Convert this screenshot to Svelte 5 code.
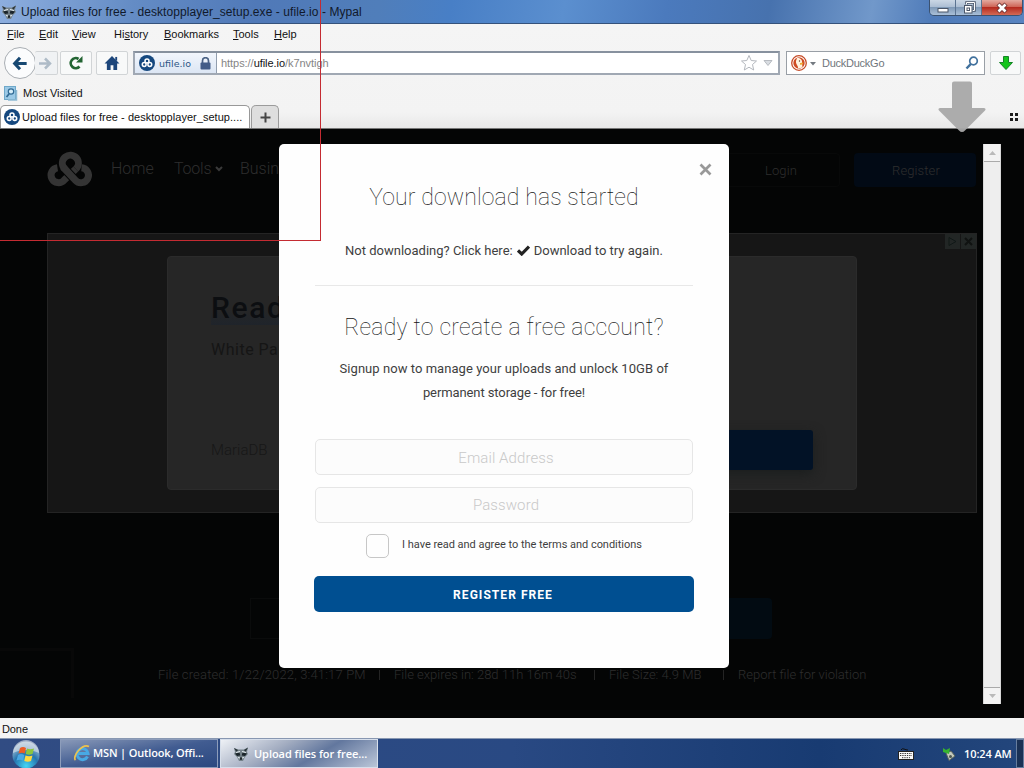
<script lang="ts">
    const menus = [
        { key: "F", rest: "ile", before: "", width: 32 },
        { key: "E", rest: "dit", before: "", width: 33 },
        { key: "V", rest: "iew", before: "", width: 42 },
        { key: "s", rest: "tory", before: "Hi", width: 50 },
        { key: "B", rest: "ookmarks", before: "", width: 69 },
        { key: "T", rest: "ools", before: "", width: 41 },
        { key: "H", rest: "elp", before: "", width: 40 },
    ];

    const details = [
        { text: "File created: 1/22/2022, 3:41:17 PM", width: 221 },
        { text: "File expires in: 28d 11h 16m 40s", width: 200 },
        { text: "File Size: 4.9 MB", width: 114 },
        { text: "Report file for violation", width: 130 },
    ];
</script>

{#snippet raccoon()}
    <svg class="raccoon" width="16" height="16" viewBox="0 0 16 16">
        <path d="M1 2 5 3.500 11 3.500 15 1.500 14 6 15 8 12 11 10 15H6L4 11 1 8 2 6Z" fill="#75828a" />
        <path d="M1 2 5 4 3.500 6ZM15 1.500 11 4 12.500 6Z" fill="#2a3439" />
        <path d="M2 7.500 6.500 6.500 7.300 9.500 4 10ZM14 7.500 9.500 6.500 8.700 9.500 12 10Z" fill="#1a242a" />
        <path d="M3 6.500 7 5.500M13 6.500 9 5.500M5 11.500 7 12M11 11.500 9 12" stroke="#e3eaed" stroke-width="1.200" />
        <path d="M7 11.500H9L8.600 14H7.400Z" fill="#10171b" />
    </svg>
{/snippet}

{#snippet knot(color)}
    <svg class="knot" width="46" height="36" viewBox="0 0 46 36" fill="none" stroke={color} stroke-width="7">
        <path d="M28.800 17 17 28.300A7.500 7.500 0 1 1 10.500 15.700" />
        <path d="M23 22 17 16A8 8 0 1 1 28.800 17" />
        <path d="M14.500 13.500 28.500 28.300A7.500 7.500 0 1 0 34.500 15.700" stroke="#050606" stroke-width="9" stroke-dasharray="0 5 13 100" />
        <path d="M16 15 28.500 28.300A7.500 7.500 0 1 0 34.500 15.700" />
    </svg>
{/snippet}

{#snippet favicon()}
    <svg width="16" height="16" viewBox="0 0 16 16">
        <circle cx="8" cy="8" r="8" fill="#15487f" />
        <g fill="none" stroke="#fff" stroke-width="1.500">
            <circle cx="8" cy="5.900" r="2" />
            <circle cx="5.200" cy="9.500" r="1.900" />
            <circle cx="10.800" cy="9.500" r="1.900" />
        </g>
    </svg>
{/snippet}

<div class="desktop">
    <header class="titlebar">
        {@render raccoon()}
        <span class="title">Upload files for free - desktopplayer_setup.exe - ufile.io - Mypal</span>
        <div class="controls">
            <span class="control min">
                <svg width="14" height="14"><rect x="2" y="7.500" width="10" height="3.500" fill="#fff" stroke="#4b5668" /></svg>
            </span>
            <span class="control max">
                <svg width="14" height="14" fill="none">
                    <path d="M4.500 3.500V1.500H12.500V9.500H10.500" stroke="#4b5668" stroke-width="2.500" />
                    <path d="M4.500 3.500V1.500H12.500V9.500H10.500" stroke="#fff" />
                    <rect x="2.500" y="4.500" width="7.500" height="7.500" fill="#fff" stroke="#4b5668" />
                    <rect x="5" y="7" width="2.500" height="2.500" stroke="#4b5668" />
                </svg>
            </span>
            <span class="control close">
                <svg width="14" height="14" viewBox="0 0 14 14">
                    <path d="M3 3 11 11M11 3 3 11" stroke="#6e3232" stroke-width="4.500" />
                    <path d="M3.500 3.500 10.500 10.500M10.500 3.500 3.500 10.500" stroke="#fff" stroke-width="2.700" />
                </svg>
            </span>
        </div>
    </header>

    <div class="chrome">
        <nav class="menubar">
            {#each menus as menu}
                <span style="width: {menu.width}px">{menu.before}<u>{menu.key}</u>{menu.rest}</span>
            {/each}
        </nav>

        <div class="toolbar">
            <span class="back">
                <svg width="16" height="15" viewBox="0 0 18 16" fill="none" stroke="#174872" stroke-width="3.500">
                    <path d="M9 1.500 3 8 9 14.500M3.500 8H16.500" />
                </svg>
            </span>
            <span class="tool forward">
                <svg width="14" height="13" viewBox="0 0 14 13" fill="none" stroke="#aebbc7" stroke-width="2.500">
                    <path d="M7 1.500 12 6.500 7 11.500M1 6.500H11.500" />
                </svg>
            </span>
            <span class="tool reload">
                <svg width="16" height="16" viewBox="0 0 16 16">
                    <path d="M11.500 11.500A5 5 0 1 1 10.500 4" fill="none" stroke="#226432" stroke-width="2.700" />
                    <path d="M14.500 1V7.500H8Z" fill="#226432" />
                </svg>
            </span>
            <span class="tool home">
                <svg width="16" height="14" viewBox="0 0 16 15" fill="#1d467b">
                    <path d="M8 0 16 8H13.500V15H9.500V10H6.500V15H2.500V8H0Z" />
                    <rect x="11.500" y="1" width="2" height="4" />
                </svg>
            </span>
            <div class="urlbar">
                <div class="identity">
                    {@render favicon()}
                    <span>ufile.io</span>
                    <svg width="11" height="13" viewBox="0 0 11 13">
                        <path d="M2.500 7V3.700A3 3 0 0 1 8.500 3.700V7" fill="none" stroke="#4b6285" stroke-width="1.700" />
                        <rect x="0.500" y="5.500" width="10" height="7" rx="1" fill="#435c87" />
                    </svg>
                </div>
                <span class="url">https://<b>ufile.io</b>/k7nvtigh</span>
                <svg class="star" width="18" height="18" viewBox="0 0 18 18">
                    <path d="M9 1.500 11.200 6.500 16.500 7 12.500 10.500 13.700 16 9 13.200 4.300 16 5.500 10.500 1.500 7 6.800 6.500Z" fill="#fff" stroke="#b4b8be" />
                </svg>
                <svg width="10" height="8" viewBox="0 0 10 8"><path d="M1 1.500H9L5 6.500Z" fill="#d9dde2" stroke="#b7bbc1" /></svg>
            </div>
            <div class="search">
                <svg width="16" height="16" viewBox="0 0 16 16">
                    <circle cx="8" cy="8" r="7.300" fill="#fff" stroke="#c54b27" stroke-width="1.300" />
                    <circle cx="8" cy="8" r="5.700" fill="#cf4b23" />
                    <path d="M6 3C9.500 2.500 11.500 5 11 8L11.500 12.500 7 13.500C7.500 10.500 4.500 9.500 5 6Z" fill="#fff3df" />
                    <path d="M9 8 12.500 7.500 11.500 9.500 9 9.700Z" fill="#eda92f" />
                    <circle cx="8.500" cy="6" r="0.700" fill="#5b3526" />
                </svg>
                <svg class="caret" width="6" height="4"><path d="M0 0H6L3 3.500Z" fill="#737980" /></svg>
                <span>DuckDuckGo</span>
                <svg width="14" height="14" viewBox="0 0 14 14" fill="none" stroke="#41719d">
                    <circle cx="8.500" cy="5" r="3.800" stroke-width="1.700" />
                    <path d="M5.800 8 1.500 12.500" stroke-width="2.500" />
                </svg>
            </div>
            <span class="tool download">
                <svg width="14" height="14" viewBox="0 0 14 14"><path d="M4.500 0.500H9.500V6.500H13.500L7 13.500 0.500 6.500H4.500Z" fill="#14c51b" stroke="#168428" /></svg>
            </span>
        </div>

        <div class="bookmarks">
            <svg width="14" height="16" viewBox="0 0 14 16">
                <rect x="0.500" y="1.500" width="11" height="13" fill="#9bc9e6" stroke="#6fa8c9" />
                <path d="M12.500 5V15H4" fill="none" stroke="#8fbad3" stroke-width="1.500" />
                <circle cx="7" cy="6.500" r="2.700" fill="#d5edf9" stroke="#306b95" stroke-width="1.200" />
                <path d="M5 9 2.500 12" stroke="#306b95" stroke-width="1.800" />
            </svg>
            <span>Most Visited</span>
        </div>

        <div class="tabs">
            <div class="tab">
                {@render favicon()}
                <span>Upload files for free - desktopplayer_setup....</span>
            </div>
            <div class="newtab">
                <svg width="11" height="11"><path d="M5.500 0.500V10.500M0.500 5.500H10.500" stroke="#444" stroke-width="2" /></svg>
            </div>
            <svg class="grid" width="9" height="8" fill="#1b1b1b">
                <path d="M0 0H3V3H0ZM5 0H8V3H5ZM0 5H3V8H0ZM5 5H8V8H5Z" />
            </svg>
        </div>
    </div>

    <main class="viewport">
        <div class="page">
            <div class="sitenav">
                {@render knot("#343434")}
                <span class="link home-link">Home</span>
                <span class="link tools-link">Tools
                    <svg width="8" height="6" fill="none" stroke="#3a3a3a" stroke-width="2"><path d="M1 1 4 4 7 1" /></svg>
                </span>
                <span class="link">Business</span>
                <span class="account login">Login</span>
                <span class="account register">Register</span>
            </div>

            <section class="banner">
                <div class="ad">
                    <h1><span>Read now</span></h1>
                    <p>White Paper</p>
                    <div class="adfoot">
                        <span>MariaDB</span>
                        <span class="adbutton"></span>
                    </div>
                </div>
                <div class="adchoices">
                    <svg width="15" height="15" fill="none" stroke="#101817"><path d="M4 3.500 11 7.500 4 11.500Z" /></svg>
                    <svg width="15" height="15" stroke="#101211" stroke-width="2"><path d="M4 4 11 11M11 4 4 11" /></svg>
                </div>
            </section>

            <div class="actions">
                <span class="copybox"></span>
                <span class="copybutton"></span>
            </div>

            <footer class="details">
                {#each details as detail, i}
                    {#if i > 0}<i></i>{/if}
                    <span style="width: {detail.width}px">{detail.text}</span>
                {/each}
            </footer>
            <div class="corner"></div>
        </div>

        <div class="scrollbar">
            <span><svg width="7" height="4"><path d="M0 4 3.500 0 7 4Z" fill="#bababa" /></svg></span>
            <span><svg width="7" height="4"><path d="M0 0 3.500 4 7 0Z" fill="#bababa" /></svg></span>
        </div>

        <div class="modal">
            <svg class="dismiss" width="13" height="13" stroke="#999" stroke-width="2.700"><path d="M1.500 1.500 11.500 11.500M11.500 1.500 1.500 11.500" /></svg>
            <h2 class="started">Your download has started</h2>
            <p class="retry">
                <span>Not downloading? Click here:</span>
                <svg width="13" height="11" fill="none" stroke="#222" stroke-width="3.200"><path d="M1 5.500 4.700 9 12 1.500" /></svg>
                <span>Download to try again.</span>
            </p>
            <hr />
            <h2 class="ready">Ready to create a free account?</h2>
            <p class="signup">Signup now to manage your uploads and unlock 10GB of<br /><span>permanent storage - for free!</span></p>
            <div class="field">Email Address</div>
            <div class="field password">Password</div>
            <div class="terms">
                <span class="checkbox"></span>
                <span>I have read and agree to the terms and conditions</span>
            </div>
            <div class="submit">REGISTER FREE</div>
        </div>
    </main>

    <div class="status">Done</div>

    <div class="taskbar">
        <div class="start">
            <svg width="30" height="30" viewBox="0 0 30 30">
                <defs>
                    <radialGradient id="orb" cx="50%" cy="90%" r="90%">
                        <stop offset="0" stop-color="#43d6f5" />
                        <stop offset="0.500" stop-color="#2675ae" />
                        <stop offset="1" stop-color="#c5d2df" />
                    </radialGradient>
                </defs>
                <circle cx="15" cy="16" r="13.500" fill="url(#orb)" />
                <path d="M2 14A13 13 0 0 1 28 14C20 10 10 10 2 14Z" fill="#d5dee8" opacity="0.650" />
                <path d="M9 9Q12 7 15 9L13.700 14.500Q11 13 7.500 14.500Z" fill="#ec5c24" />
                <path d="M16 9.500Q19 11 23 9.500L21.500 15Q18 16.500 14.700 15Z" fill="#8cc63f" />
                <path d="M7 16Q10 14 13.300 16L12 21.500Q9 20 5.500 21.500Z" fill="#4ba8e4" />
                <path d="M14.500 16.500Q18 18 21.500 16.500L20 22Q17 23.500 13.300 22Z" fill="#ffd83e" />
            </svg>
        </div>
        <div class="task">
            <svg width="18" height="18" viewBox="0 0 18 18" fill="none">
                <path d="M14.500 12.500A5.500 5.500 0 1 1 15 9.500H5" stroke="#48a9e4" stroke-width="3" />
                <path d="M2.500 16C-1 13 9 -1 16 2.500" stroke="#edc24e" stroke-width="1.700" />
            </svg>
            <span>MSN | Outlook, Offi...</span>
        </div>
        <div class="task active">
            {@render raccoon()}
            <span>Upload files for free...</span>
        </div>
        <div class="tray">
            <svg width="16" height="14" viewBox="0 0 16 14">
                <path d="M3 3Q4 1 6 2T10 3" fill="none" stroke="#111" />
                <rect x="0.500" y="4.500" width="15" height="8" fill="#f8f8f8" stroke="#222" />
                <path d="M2 6.500H14M2 8.500H14M4 10.700H12" stroke="#333" stroke-dasharray="1.300 1" />
            </svg>
            <svg width="14" height="14" viewBox="0 0 14 14">
                <path d="M4 6 9 4 13 9 7 13.500Z" fill="#c3c9bc" stroke="#59645d" />
                <path d="M1 1 4 3 8 1 7 7 1 5Z" fill="#37b52f" />
                <circle cx="8.500" cy="9.500" r="1.500" fill="#4c5751" />
            </svg>
            <span class="clock">10:24 AM</span>
            <span class="peek"></span>
        </div>
    </div>

    <svg class="saving" width="48" height="52" viewBox="0 0 48 52">
        <path d="M16 0.500H32Q34 0.500 34 2.500V27H46Q48.500 27.500 47 29.500L27 49.500Q24 52.500 21 49.500L1 29.500Q-0.500 27.500 2 27H14V2.500Q14 0.500 16 0.500Z" fill="#a9a9a9" />
    </svg>
    <div class="frame"></div>
</div>

<style>
    :global(body) {
        margin: 0;
        overflow: hidden;
    }

    .desktop {
        position: relative;
        width: 1024px;
        height: 768px;
        display: flex;
        flex-direction: column;
        overflow: hidden;
        font-family: "Liberation Sans", Arial, sans-serif;
        font-size: 11px;
        color: #111;
        white-space: nowrap;
    }

    .desktop * {
        box-sizing: border-box;
    }

    svg {
        flex: none;
        display: block;
    }

    h1, h2, p, hr {
        margin: 0;
    }

    .titlebar {
        height: 24px;
        display: flex;
        align-items: center;
        padding-left: 1px;
        border-bottom: 1px solid #35527b;
        background: linear-gradient(100deg, #8daede 0, #648cc5 13%, #5079b8 25%, #507eba 37%, #487fc6 44%, #5b8fcf 55%, #4b7abd 65%, #4772ae 75%, #7198ca 85%, #4f7bb9 91%, #5884c1 100%);
    }

    .title {
        padding-left: 4px;
        font-size: 12px;
        letter-spacing: 0.07px;
        color: #10192b;
    }

    .controls {
        height: 16px;
        display: flex;
        align-self: flex-start;
        margin-left: auto;
        margin-right: 1px;
        border: 1px solid #3b5270;
        border-top: 0;
        border-radius: 0 0 5px 5px;
        overflow: hidden;
    }

    .control {
        width: 26px;
        display: flex;
        align-items: center;
        justify-content: center;
        background: linear-gradient(#cbd7e5, #adbfd4 45%, #809ab7 50%, #a9bfd8);
        border-right: 1px solid #5b7391;
    }

    .control.close {
        width: 40px;
        border: 0;
        background: linear-gradient(#e3aaa0, #cf6658 45%, #b52b20 50%, #d36a54);
    }

    .chrome {
        height: 105px;
        display: flex;
        flex-direction: column;
        background: linear-gradient(#f5f5f5, #f3f3f3 85%, #e8e8e8);
        border-bottom: 1px solid #777;
    }

    .menubar {
        height: 22px;
        display: flex;
        align-items: center;
        padding: 0 0 2px 7px;
    }

    .toolbar {
        height: 34px;
        display: flex;
        align-items: center;
    }

    .back {
        width: 32px;
        height: 32px;
        display: flex;
        align-items: center;
        justify-content: center;
        margin-left: 4px;
        border: 1px solid #a9aeb3;
        border-radius: 50%;
        background: #fbfcfd;
    }

    .tool {
        height: 24px;
        display: flex;
        align-items: center;
        justify-content: center;
        border: 1px solid #d1d4d6;
        border-radius: 2px;
        background: #f8f9f9;
    }

    .tool.forward {
        width: 23px;
        margin-left: -1px;
        padding-right: 3px;
        border-left: 0;
        background: #f0f2f4;
    }

    .tool.reload, .tool.home {
        width: 32px;
        margin-left: 2px;
    }

    .tool.home {
        margin-left: 4px;
    }

    .urlbar {
        width: 647px;
        height: 24px;
        display: flex;
        align-items: center;
        margin-left: 5px;
        padding-right: 5px;
        border: 2px solid #a0a8b3;
        border-top-color: #87919e;
        background: #fff;
    }

    .identity {
        width: 82px;
        height: 20px;
        display: flex;
        align-items: center;
        padding-left: 4px;
        border-right: 1px solid #929eae;
        background: linear-gradient(#f2f6fc, #dce6f4);
        color: #2d5685;
    }

    .identity span {
        width: 45px;
        padding-left: 4px;
        font-family: "DejaVu Sans", sans-serif;
        font-size: 9.5px;
    }

    .url {
        padding-left: 4px;
        color: #858585;
        letter-spacing: -0.05px;
    }

    .url b {
        font-weight: normal;
        color: #111;
    }

    .star {
        margin-left: auto;
        margin-right: 5px;
    }

    .search {
        width: 199px;
        height: 24px;
        display: flex;
        align-items: center;
        margin-left: 6px;
        padding: 0 5px 0 4px;
        border: 1px solid #999fa6;
        background: #fff;
        color: #70757b;
    }

    .search .caret {
        margin: 1px 6px 0 3px;
    }

    .search span {
        flex: 1;
        letter-spacing: -0.25px;
    }

    .tool.download {
        width: 31px;
        margin-left: 5px;
    }

    .bookmarks {
        height: 25px;
        display: flex;
        align-items: center;
        padding: 1px 0 0 4px;
    }

    .bookmarks span {
        padding-left: 5px;
    }

    .tabs {
        height: 23px;
        display: flex;
        margin-top: auto;
    }

    .tab {
        width: 250px;
        height: 23px;
        display: flex;
        align-items: center;
        padding-left: 3px;
        border: 1px solid #989898;
        border-bottom: 0;
        border-radius: 5px 5px 0 0;
        background: #fff;
    }

    .tab span {
        padding-left: 2px;
        letter-spacing: 0.03px;
    }

    .newtab {
        width: 28px;
        display: flex;
        align-items: center;
        justify-content: center;
        margin-left: 1px;
        border: 1px solid #9b9b9b;
        border-bottom: 0;
        border-radius: 5px 5px 0 0;
        background: #dedede;
    }

    .grid {
        margin: 8px 5px 0 auto;
    }

    .viewport {
        position: relative;
        height: 589px;
        background: #040505;
    }

    .page {
        width: 983px;
        height: 589px;
        display: flex;
        flex-direction: column;
        color: #2e2e2e;
        font-family: Roboto, "Liberation Sans", sans-serif;
        font-weight: 300;
    }

    .sitenav {
        height: 104px;
        display: flex;
        align-items: flex-start;
        padding: 18px 7px 0 47px;
        font-size: 16px;
    }

    .knot {
        margin-top: 5px;
        overflow: visible;
    }

    .link {
        padding-top: 12px;
    }

    .home-link {
        width: 81px;
        padding-left: 18px;
    }

    .tools-link {
        width: 66px;
        display: flex;
        align-items: center;
        gap: 4px;
        letter-spacing: -0.2px;
    }

    .account {
        width: 122px;
        height: 34px;
        display: flex;
        align-items: center;
        justify-content: center;
        margin-top: 6px;
        padding-left: 2px;
        font-size: 13px;
        letter-spacing: 0.1px;
    }

    .login {
        margin-left: auto;
        width: 120px;
        border: 1px solid #080909;
        border-radius: 4px;
    }

    .register {
        margin-left: 14px;
        border-radius: 4px;
        background: #020a15;
    }

    .banner {
        width: 930px;
        height: 280px;
        display: flex;
        margin-left: 47px;
        padding: 22px 0 0 119px;
        border: 1px solid #242424;
        background: #161616;
    }

    .ad {
        width: 690px;
        height: 234px;
        display: flex;
        flex-direction: column;
        padding: 34px 43px 19px;
        border: 1px solid #2b2b2b;
        border-radius: 4px;
        background: #262626;
    }

    .ad h1 {
        height: 48px;
        font-size: 30px;
        line-height: 34px;
        font-weight: 500;
        letter-spacing: 1.6px;
        color: #0c0e11;
    }

    .ad h1 span {
        background: linear-gradient(#262626 55%, #1f242b);
    }

    .ad p {
        font-size: 16px;
        line-height: 22px;
        font-weight: 400;
        letter-spacing: 0.5px;
        color: #151515;
    }

    .adfoot {
        display: flex;
        align-items: center;
        justify-content: space-between;
        margin-top: auto;
        font-size: 15px;
        color: #171717;
    }

    .adbutton {
        width: 200px;
        height: 40px;
        border-radius: 3px;
        background: #021226;
        box-shadow: 0 4px 12px #1b1e1e;
    }

    .adchoices {
        height: 15px;
        display: flex;
        gap: 1px;
        margin: -22px 0 0 88px;
    }

    .adchoices svg {
        background: #222625;
    }

    .actions {
        display: flex;
        justify-content: space-between;
        padding: 85px 211px 0 250px;
    }

    .copybox {
        width: 60px;
        height: 41px;
        border: 1px solid #0a0b0b;
    }

    .copybutton {
        width: 60px;
        height: 41px;
        border-radius: 4px;
        background: #020b12;
    }

    .details {
        display: flex;
        padding: 28px 0 0 158px;
        font-size: 13px;
        line-height: 16px;
    }

    .details span:first-child {
        letter-spacing: 0.16px;
    }

    .details i {
        width: 1px;
        height: 10px;
        margin: 3px 14px 0 0;
        background: #242424;
    }

    .corner {
        width: 74px;
        height: 50px;
        margin-top: -35px;
        border: 3px solid #080808;
        border-width: 3px 3px 0 0;
    }

    .scrollbar {
        position: absolute;
        top: 15px;
        left: 983px;
        width: 18px;
        height: 560px;
        display: flex;
        flex-direction: column;
        justify-content: space-between;
        background: #eee;
        border: 1px solid #d8d8d8;
        border-width: 0 1px;
    }

    .scrollbar span {
        height: 18px;
        display: flex;
        align-items: center;
        justify-content: center;
        background: #f3f3f3;
    }

    .scrollbar span:first-child {
        border-bottom: 1px solid #aaa;
    }

    .scrollbar span:last-child {
        height: 17px;
        border-top: 1px solid #aaa;
    }

    .modal {
        position: absolute;
        top: 15px;
        left: 279px;
        width: 450px;
        height: 524px;
        display: flex;
        flex-direction: column;
        align-items: center;
        padding-top: 19px;
        border-radius: 5px;
        background: #fefefe;
        color: #3f3f3f;
        font-family: Roboto, "Liberation Sans", sans-serif;
    }

    .dismiss {
        align-self: flex-end;
        margin-right: 17px;
    }

    .modal h2 {
        height: 32px;
        font-size: 23px;
        line-height: 32px;
        font-weight: 100;
        letter-spacing: 0.25px;
        color: #111;
    }

    .modal h2.started {
        margin-top: 6px;
        letter-spacing: 0.12px;
    }

    .retry {
        height: 24px;
        display: flex;
        align-items: center;
        gap: 4px;
        margin-top: 24px;
        font-size: 13px;
    }

    hr {
        width: 378px;
        height: 1px;
        margin-top: 23px;
        border: 0;
        background: #e8e8e8;
    }

    .modal h2.ready {
        margin-top: 26px;
    }

    .signup {
        margin-top: 13px;
        font-size: 13px;
        line-height: 24px;
        letter-spacing: 0.05px;
        text-align: center;
    }

    .signup span {
        letter-spacing: -0.1px;
    }

    .field {
        width: 378px;
        height: 36px;
        display: flex;
        align-items: center;
        justify-content: center;
        margin-top: 34px;
        padding: 2px 0 0 4px;
        border: 1px solid #e6e6e6;
        border-radius: 5px;
        background: #fcfcfc;
        color: #c9c9c9;
        font-size: 15px;
        font-weight: 300;
        letter-spacing: 0.1px;
    }

    .field.password {
        margin-top: 12px;
        padding-top: 0;
    }

    .terms {
        display: flex;
        margin-top: 11px;
        font-size: 11px;
        line-height: 21px;
        letter-spacing: -0.03px;
    }

    .checkbox {
        width: 23px;
        height: 24px;
        margin-right: 13px;
        border: 1px solid #c7c7c7;
        border-radius: 5px;
    }

    .submit {
        width: 380px;
        height: 36px;
        display: flex;
        align-items: center;
        justify-content: center;
        margin-top: 18px;
        padding: 1px 2px 0 0;
        border-radius: 5px;
        background: #004f91;
        color: #fff;
        font-size: 12px;
        font-weight: 700;
        letter-spacing: 1.05px;
    }

    .status {
        height: 20px;
        padding-left: 2px;
        background: #f4f4f4;
        line-height: 23px;
        letter-spacing: -0.1px;
    }

    .taskbar {
        height: 30px;
        display: flex;
        border-top: 1px solid #8897b1;
        background: linear-gradient(90deg, #314c83, #294983 50%, #183b72 80%, #23467c);
        font-family: "Open Sans", "Noto Sans", sans-serif;
        font-size: 11px;
        font-weight: 600;
        color: #fff;
    }

    .start {
        width: 60px;
        padding-left: 11px;
    }

    .task {
        width: 158px;
        display: flex;
        align-items: center;
        margin-right: 2px;
        padding: 0 0 2px 12px;
        border: 1px solid #8d9dbb;
        background: linear-gradient(170deg, #8999b8, #415c91 50%, #2b4880);
        letter-spacing: -0.15px;
    }

    .task span {
        padding-left: 2px;
    }

    .task.active {
        padding-bottom: 0;
        border-color: #d7dfeb;
        background: linear-gradient(150deg, #eef1f6, #a3adc1 35%, #62779e 60%, #bbc6d8);
        letter-spacing: -0.05px;
    }

    .task.active span {
        padding-left: 5px;
    }

    .tray {
        display: flex;
        align-items: center;
        margin-left: auto;
    }

    .tray svg:first-child {
        margin-right: 28px;
    }

    .clock {
        width: 52px;
        padding-left: 8px;
        box-sizing: content-box;
        letter-spacing: -0.1px;
    }

    .peek {
        width: 8px;
        height: 29px;
        border: 1px solid #667d9e;
        background: #1a3155;
    }

    .saving {
        position: absolute;
        top: 81px;
        left: 938px;
        opacity: 0.95;
    }

    .frame {
        position: absolute;
        top: 0;
        left: 0;
        width: 321px;
        height: 241px;
        border: 1px solid #c42b32;
        border-width: 0 1px 1px 0;
    }
</style>
